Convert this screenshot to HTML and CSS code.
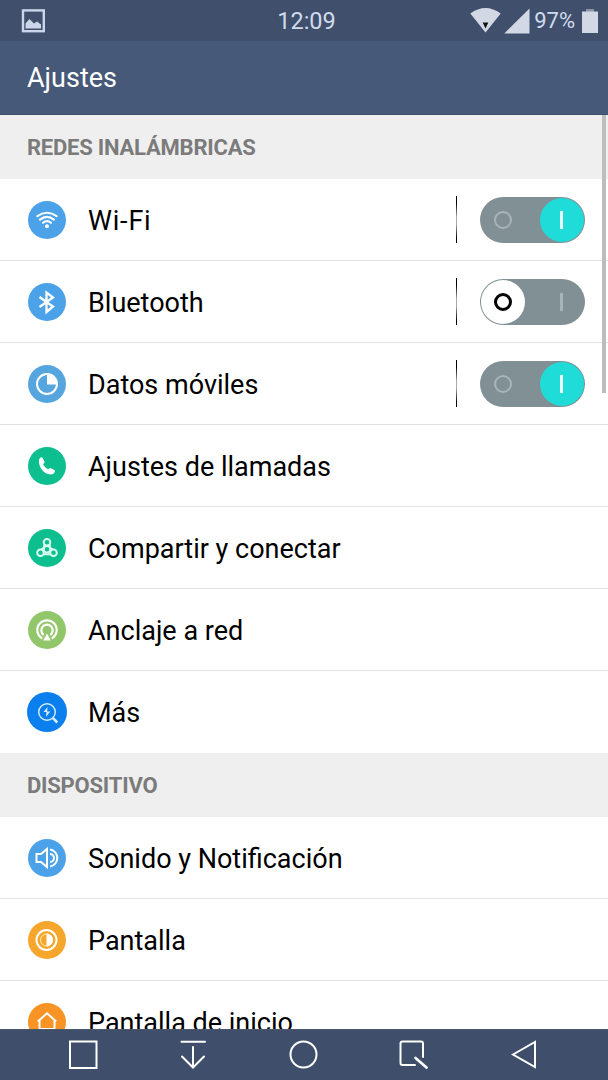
FILE: index.html
```
<!DOCTYPE html>
<html lang="es">
<head>
    <meta charset="UTF-8">
    <meta name="viewport" content="width=device-width, initial-scale=1.0">
    <title>Ajustes</title>
    <link rel="stylesheet" href="styles.css">
</head>
<body>

<div class="phone">
    <div class="status-bar">
        <div class="status-left">
            <svg width="24" height="24" viewBox="0 0 24 24">
                <rect x="2" y="1.4" width="20.8" height="20.8" fill="none" stroke="#cbd6ea" stroke-width="2.4"/>
                <path d="M4.500 19.500v-5l4-4.500 4.500 4.500 3-2 4 3v4z" fill="#cbd6ea"/>
            </svg>
        </div>
        <div class="clock">12:09</div>
        <div class="status-right">
            <svg width="31" height="25" viewBox="0 0 31 25">
                <path d="M.3 5.500Q15.500-5.500 30.700 5.500L15.500 24.500z" fill="#d3d9e4"/>
                <path d="M12.700 14.500h5.600l-2.800 6z" fill="#111"/>
            </svg>
            <svg width="26" height="26" viewBox="0 0 26 26">
                <path d="M25.500.500v25H.300z" fill="#d3d9e4"/>
            </svg>
            <span class="percent">97%</span>
            <svg width="16" height="24" viewBox="0 0 16 24">
                <rect x="4" y="0" width="8" height="3" fill="#8b94a6"/>
                <rect x="0" y="2.500" width="16" height="21.500" fill="#d3d9e4"/>
            </svg>
        </div>
    </div>

    <header class="app-bar">
        <h1>Ajustes</h1>
    </header>

    <main class="content">
        <h2>REDES INALÁMBRICAS</h2>
        <ul class="list">
            <li class="row">
                <svg class="icon" viewBox="0 0 40 40">
                    <circle cx="20" cy="20" r="19" fill="#4ba2e9"/>
                    <g fill="none" stroke="#fff" stroke-width="2.100" stroke-linecap="round">
                        <path d="M10.300 16.200Q20 9.200 29.700 16.200"/>
                        <path d="M13 19.600Q20 14 27 19.600"/>
                        <path d="M16 22.800Q20 19.300 24 22.800"/>
                    </g>
                    <circle cx="20" cy="26.300" r="2" fill="#fff"/>
                </svg>
                <span class="label wifi">Wi-Fi</span>
                <span class="divider"></span>
                <span class="toggle on"><i class="knob"></i><i class="off-mark"></i><i class="on-mark"></i></span>
            </li>
            <li class="row">
                <svg class="icon" viewBox="0 0 40 40">
                    <circle cx="20" cy="20" r="19" fill="#4ba2e9"/>
                    <path d="M12.500 15l13.500 9.500-6.500 5.500V10.500l6.500 5L12.500 25" fill="none" stroke="#fff" stroke-width="2.300"/>
                </svg>
                <span class="label">Bluetooth</span>
                <span class="divider"></span>
                <span class="toggle"><i class="knob"></i><i class="off-mark"></i><i class="on-mark"></i></span>
            </li>
            <li class="row">
                <svg class="icon" viewBox="0 0 40 40">
                    <circle cx="20" cy="20" r="19" fill="#55a5de"/>
                    <circle cx="20" cy="20" r="10" fill="none" stroke="#fff" stroke-width="2"/>
                    <path d="M20 20.500V10a10 10 0 0 1 10 10.500z" fill="#fff"/>
                </svg>
                <span class="label">Datos móviles</span>
                <span class="divider"></span>
                <span class="toggle on"><i class="knob"></i><i class="off-mark"></i><i class="on-mark"></i></span>
            </li>
            <li class="row">
                <svg class="icon" viewBox="0 0 40 40">
                    <circle cx="20" cy="20" r="19" fill="#0dbf8f"/>
                    <path d="M12 13.800q.500-2.500 2.500-2.600.800 0 1.200.800l1.800 3.600q.300.800-.300 1.400l-1.200 1.300q1.600 3.500 5 5l1.800-1.100q.600-.300 1.200 0l3.400 1.900q.900.600.500 1.500-1 3-4.200 2.900C17 28.500 11 21 12 13.800z" fill="#fff"/>
                </svg>
                <span class="label">Ajustes de llamadas</span>
            </li>
            <li class="row">
                <svg class="icon" viewBox="0 0 40 40">
                    <circle cx="20" cy="20" r="19" fill="#0dbf8f"/>
                    <g fill="none" stroke="#d9fff3" stroke-width="2">
                        <circle cx="20" cy="14.300" r="3.300"/>
                        <circle cx="13.500" cy="24.800" r="3.300"/>
                        <circle cx="26.500" cy="24.800" r="3.300"/>
                        <circle cx="20" cy="21.200" r="3.300"/>
                        <path d="M17.200 16.500v3l-2.900 2M22.800 16.500v3l2.900 2M16.500 26.300h7"/>
                    </g>
                </svg>
                <span class="label">Compartir y conectar</span>
            </li>
            <li class="row">
                <svg class="icon" viewBox="0 0 40 40">
                    <circle cx="20" cy="20" r="19" fill="#92c66b"/>
                    <g fill="none" stroke="#fff" stroke-width="2.200">
                        <path d="M15.300 28.500A9.700 9.700 0 1 1 24.700 28.500"/>
                        <path d="M16.700 25A5.700 5.700 0 1 1 23.300 25"/>
                    </g>
                    <path d="M20 23.500l3.800 7h-7.600z" fill="#fff"/>
                </svg>
                <span class="label">Anclaje a red</span>
            </li>
            <li class="row">
                <svg class="icon" viewBox="0 0 40 40">
                    <circle cx="20" cy="20" r="20" fill="#0c7fee"/>
                    <circle cx="20" cy="20" r="8.300" fill="none" stroke="#d6efff" stroke-width="1.400"/>
                    <path d="M20.500 15l-4 5h3l-.500 5 4.200-5.500h-3z" fill="#d6efff"/>
                    <path d="M26 26.200l4.300 4.300" stroke="#d6efff" stroke-width="2.600"/>
                </svg>
                <span class="label">Más</span>
            </li>
        </ul>

        <h2>DISPOSITIVO</h2>
        <ul class="list">
            <li class="row">
                <svg class="icon" viewBox="0 0 40 40">
                    <circle cx="20" cy="20" r="19" fill="#4ba2e9"/>
                    <g fill="none" stroke="#fff" stroke-width="2">
                        <path d="M9.500 16h4.500l6-5v18l-6-5H9.500z"/>
                        <path d="M23 11.500a8.600 8.600 0 0 1 0 17"/>
                        <path d="M23 16a4 4 0 0 1 0 8"/>
                    </g>
                </svg>
                <span class="label">Sonido y Notificación</span>
            </li>
            <li class="row">
                <svg class="icon" viewBox="0 0 40 40">
                    <circle cx="20" cy="20" r="19" fill="#f5a62b"/>
                    <circle cx="19.500" cy="20" r="10" fill="none" stroke="#fff" stroke-width="2"/>
                    <circle cx="19.500" cy="20" r="6" fill="none" stroke="#ffe9c4" stroke-width="1"/>
                    <path d="M19.500 13.500a6.500 6.500 0 0 1 0 13z" fill="#fff"/>
                </svg>
                <span class="label">Pantalla</span>
            </li>
            <li class="row">
                <svg class="icon" viewBox="0 0 40 40">
                    <circle cx="20" cy="20" r="19" fill="#f79425"/>
                    <path d="M10.800 19.500L20 11.300l9.200 8.200M12.500 18v9h15v-9" fill="none" stroke="#fff" stroke-width="2"/>
                </svg>
                <span class="label">Pantalla de inicio</span>
            </li>
        </ul>
        <div class="scrollbar"></div>
    </main>

    <nav class="nav-bar">
        <svg width="110" height="50" viewBox="28 0 110 50">
            <rect x="70" y="11.500" width="26.500" height="26.500"/>
        </svg>
        <svg width="110" height="50" viewBox="138 0 110 50">
            <path d="M181.500 11.700h23.500M193 17v20M182 26.500L193 37.500l11-11"/>
        </svg>
        <svg width="110" height="50" viewBox="248 0 110 50">
            <circle cx="303.500" cy="24.500" r="13"/>
        </svg>
        <svg width="110" height="50" viewBox="358 0 110 50">
            <path d="M415 35h-12.500q-2 0-2-2V13.500q0-2 2-2H421q2 0 2 2V27"/>
            <path d="M415.500 28l11 9.500" stroke-width="2.700"/>
        </svg>
        <svg width="110" height="50" viewBox="468 0 110 50">
            <path d="M513 24.500L535 12v25z"/>
        </svg>
    </nav>
</div>

</body>
</html>
```
FILE: styles.css
```
* {
    box-sizing: border-box;
}
body {
    font-family: Roboto, sans-serif;
    background-color: #fff;
    margin: 0;
}
.phone {
    width: 608px;
    height: 1080px;
    display: flex;
    flex-direction: column;
    overflow: hidden;
}
.status-bar {
    flex: none;
    height: 41px;
    padding: 0 10px 0 21px;
    display: grid;
    grid-template-columns: 1fr auto 1fr;
    align-items: center;
    background-color: #404f6b;
    color: #d0dbee;
}
.status-left,
.status-right {
    display: flex;
    align-items: center;
}
.status-right {
    justify-content: flex-end;
    gap: 3px;
}
.clock {
    padding: 1px 6px 0 0;
    font-size: 23.5px;
}
.percent {
    margin: 0 4px 0 1px;
    font-size: 22px;
}
.app-bar {
    flex: none;
    height: 74px;
    padding-left: 27px;
    display: flex;
    align-items: center;
    background-color: #465978;
    border-bottom: 1px solid #3e4f6d;
}
h1 {
    margin: 0;
    padding-top: 1px;
    color: #fff;
    font-size: 27px;
    font-weight: 400;
}
.content {
    flex: 1;
    min-height: 0;
    position: relative;
    overflow: hidden;
}
h2 {
    height: 64px;
    margin: 0;
    padding: 1px 0 0 27px;
    background-color: #efefef;
    color: #7b7b7b;
    font-size: 22px;
    font-weight: 700;
    line-height: 64px;
    letter-spacing: -0.22px;
}
.list {
    list-style: none;
    margin: 0;
    padding: 0;
}
.row {
    height: 82px;
    padding: 0 23px 0 27px;
    display: flex;
    align-items: center;
    border-bottom: 1px solid #e2e2e2;
}
.row:last-child {
    border-bottom-color: transparent;
}
.icon {
    flex: none;
    width: 40px;
    height: 40px;
    margin-right: 21px;
}
.label {
    flex: 1;
    padding-top: 3px;
    color: #000;
    font-size: 27px;
    white-space: nowrap;
}
.wifi {
    letter-spacing: 0.8px;
}
.divider {
    width: 1px;
    height: 47px;
    margin-right: 23px;
    background: linear-gradient(#000 15%, #aaa 45%, #aaa 60%, #000 90%);
}
.toggle {
    position: relative;
    width: 105px;
    height: 46px;
    border-radius: 23px;
    background-color: #819094;
}
.knob {
    position: absolute;
    top: 1px;
    left: 1px;
    width: 44px;
    height: 44px;
    border-radius: 50%;
    background-color: #fff;
}
.off-mark {
    position: absolute;
    top: 14px;
    left: 14px;
    width: 18px;
    height: 18px;
    border: 3px solid #000;
    border-radius: 50%;
}
.on-mark {
    position: absolute;
    top: 14px;
    right: 22px;
    width: 3px;
    height: 18px;
    background-color: #a9b4b7;
}
.toggle.on .knob {
    left: 60px;
    background-color: #1fdcd8;
}
.toggle.on .off-mark {
    border: 2px solid #a9b4b7;
}
.toggle.on .on-mark {
    background-color: #e8ffff;
}
.scrollbar {
    position: absolute;
    top: 0;
    right: 2px;
    width: 4px;
    height: 278px;
    background-color: #bdbdbd;
}
.nav-bar {
    flex: none;
    height: 51px;
    padding-left: 28px;
    display: flex;
    background-color: #3f4f6b;
    border-top: 1px solid #4d576a;
}
.nav-bar svg {
    fill: none;
    stroke: #fff;
    stroke-width: 2;
    stroke-linecap: round;
}
```
